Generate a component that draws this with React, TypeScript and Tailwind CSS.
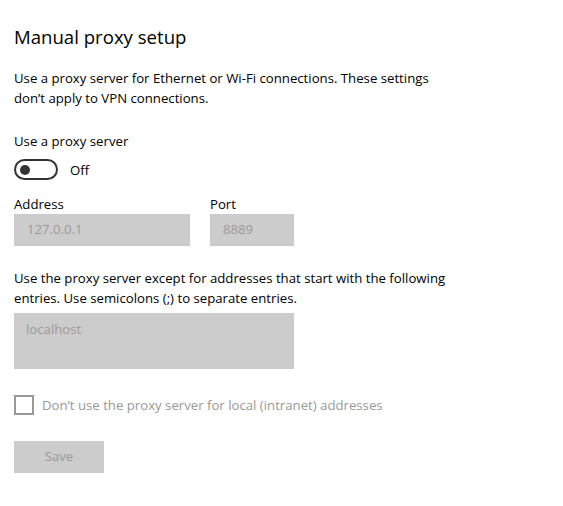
import React from "react";

export default function App() {
  return (
    <div className="w-[563px] h-[506px] bg-white text-black pl-[14px] pt-[23px] font-['Open_Sans',sans-serif]">
      <h1 className="text-[18.6px] leading-[28px] font-normal">Manual proxy setup</h1>

      <p className="mt-[17px] text-[13.2px] leading-[20px]">
        Use a proxy server for Ethernet or Wi-Fi connections. These settings
        <br />
        don’t apply to VPN connections.
      </p>

      <p className="mt-[23px] text-[13.2px] leading-[20px]">Use a proxy server</p>

      {/* toggle */}
      <div className="mt-[8px] flex items-center gap-[12px]">
        <div className="w-[44px] h-[21px] rounded-full border-2 border-[#333] flex items-center pl-[4px]">
          <div className="w-[10px] h-[10px] rounded-full bg-[#333]" />
        </div>
        <span className="text-[13.2px] leading-[20px]">Off</span>
      </div>

      <div className="mt-[14px] flex gap-[20px]">
        <div className="flex flex-col">
          <label className="text-[13.2px] leading-[20px]">Address</label>
          <div className="w-[176px] h-[32px] bg-[#cccccc] px-[13px] flex items-center text-[13.2px] text-[#9a9a9a]">
            127.0.0.1
          </div>
        </div>
        <div className="flex flex-col">
          <label className="text-[13.2px] leading-[20px]">Port</label>
          <div className="w-[84px] h-[32px] bg-[#cccccc] px-[13px] flex items-center text-[13.2px] text-[#9a9a9a]">
            8889
          </div>
        </div>
      </div>

      <p className="mt-[22px] text-[13.2px] leading-[20px]">
        Use the proxy server except for addresses that start with the following
        <br />
        entries. Use semicolons (;) to separate entries.
      </p>

      <div className="mt-[5px] w-[280px] h-[56px] bg-[#cccccc] px-[12px] pt-[6px] text-[13.2px] leading-[20px] text-[#9a9a9a]">
        localhost
      </div>

      <label className="mt-[26px] flex items-center gap-[8px]">
        <span className="w-[20px] h-[20px] border-2 border-[#999]" />
        <span className="text-[13.2px] leading-[20px] text-[#999]">
          Don’t use the proxy server for local (intranet) addresses
        </span>
      </label>

      <button className="mt-[26px] w-[90px] h-[32px] bg-[#cccccc] text-[13.2px] text-[#999]">
        Save
      </button>
    </div>
  );
}
